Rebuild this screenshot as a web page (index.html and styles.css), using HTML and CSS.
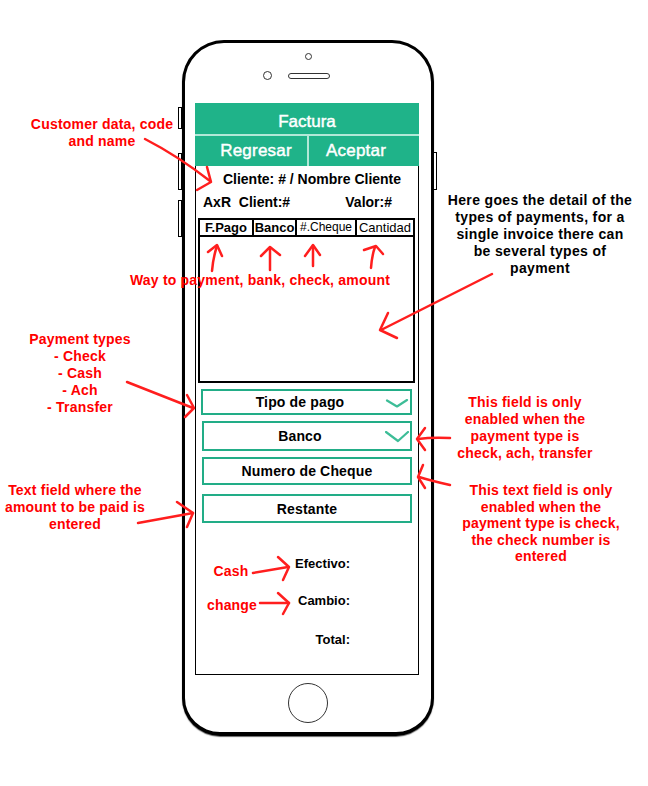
FILE: index.html
```html
<!DOCTYPE html>
<html lang="es">
<head>
<meta charset="utf-8">
<title>Factura mockup</title>
<link rel="stylesheet" href="styles.css">
</head>
<body>
<div class="canvas">
  <div class="phone">
    <span class="side-btn left b1"></span>
    <span class="side-btn left b2"></span>
    <span class="side-btn left b3"></span>
    <span class="side-btn right b4"></span>
    <div class="phone-top">
      <span class="sensor"></span>
      <div class="cam-row"><span class="cam"></span><span class="speaker"></span></div>
    </div>
    <div class="screen">
      <div class="title">Factura</div>
      <div class="actions">
        <div class="act back">Regresar</div>
        <div class="sep"></div>
        <div class="act ok">Aceptar</div>
      </div>
      <div class="content">
        <div class="cliente">Cliente: # / Nombre Cliente</div>
        <div class="info"><span>AxR&nbsp; Client:#</span><span>Valor:#</span></div>
        <div class="grid">
          <div class="grid-head">
            <div class="th bold">F.Pago</div>
            <div class="th bold">Banco</div>
            <div class="th small">#.Cheque</div>
            <div class="th last">Cantidad</div>
          </div>
        </div>
        <div class="field f1 select">Tipo de pago
          <svg class="chev" width="24" height="10" viewBox="0 0 24 10"><path d="M2 1.5 L12 7.5 L22 1"/></svg>
        </div>
        <div class="field f2 select">Banco
          <svg class="chev" width="24" height="12" viewBox="0 0 24 12"><path d="M1 1 L13 10 L23 1"/></svg>
        </div>
        <div class="field f3">Numero de Cheque</div>
        <div class="field f4">Restante</div>
        <div class="totals">
          <div class="t1">Efectivo:</div>
          <div class="t2">Cambio:</div>
          <div class="t3">Total:</div>
        </div>
      </div>
    </div>
    <div class="home"></div>
  </div>

  <svg class="marks" width="648" height="786" viewBox="0 0 648 786">
    <g class="red">
      <path d="M145 139 Q178 156 210 181"/>
      <path d="M207 167 L211 182 L197 190"/>
      <path d="M492 274 L381 330"/>
      <path d="M388 313 L380 330 L397 338"/>
      <path d="M212 271 Q213 258 217 246"/>
      <path d="M208 252 L217 245 L222 256"/>
      <path d="M270 270 L270 248"/>
      <path d="M261 256 L270 247 L280 255"/>
      <path d="M313 266 L313 246"/>
      <path d="M305 256 L313 245 L320 255"/>
      <path d="M371 268 Q372 255 375 247"/>
      <path d="M364 250 L376 246 L383 254"/>
      <path d="M127 382 L193 408"/>
      <path d="M187 395 L194 408 L185 417"/>
      <path d="M450 438 Q432 437 418 439"/>
      <path d="M425 428 L417 439 L425 450"/>
      <path d="M450 485 Q432 481 419 477"/>
      <path d="M423 465 L418 477 L425 488"/>
      <path d="M138 523 Q165 518 193 513"/>
      <path d="M177 502 L193 513 L187 527"/>
      <path d="M253 573 L288 567"/>
      <path d="M278 557 L289 567 L283 580"/>
      <path d="M260 603 L289 603"/>
      <path d="M278 593 L289 603 L283 614"/>
    </g>
  </svg>

  <div class="note n-customer">Customer data, code<br>and name</div>
  <div class="note n-way">Way to payment, bank, check, amount</div>
  <div class="note n-types">Payment types<br>- Check<br>- Cash<br>- Ach<br>- Transfer</div>
  <div class="note dark n-detail">Here goes the detail of the<br>types of payments, for a<br>single invoice there can<br>be several types of<br>payment</div>
  <div class="note n-bank">This field is only<br>enabled when the<br>payment type is<br>check, ach, transfer</div>
  <div class="note n-check">This text field is only<br>enabled when the<br>payment type is check,<br>the check number is<br>entered</div>
  <div class="note n-amount">Text field where the<br>amount to be paid is<br>entered</div>
  <div class="note n-cash">Cash</div>
  <div class="note n-change">change</div>
</div>
</body>
</html>
```

FILE: styles.css
```css
html, body {
  margin: 0;
  padding: 0;
  background: #fff;
}

body {
  font-family: "Liberation Sans", Arial, sans-serif;
  color: #000;
}

.canvas {
  position: relative;
  width: 648px;
  height: 786px;
  box-sizing: border-box;
  padding: 40px 0 0 182px;
  overflow: hidden;
}

/* ---------- phone ---------- */
.phone {
  position: relative;
  box-sizing: border-box;
  width: 252px;
  height: 696px;
  border: 3px solid #000;
  border-bottom-width: 4px;
  border-radius: 42px 42px 38px 38px;
  box-shadow: 0 1px 1px rgba(0, 0, 0, 0.6);
  display: flex;
  flex-direction: column;
  background: #fff;
}

.side-btn {
  position: absolute;
  width: 4px;
  box-sizing: border-box;
  border: 1px solid #000;
  background: #fff;
}
.side-btn.left { left: -7px; }
.side-btn.right { right: -6px; }
.b1 { top: 64px; height: 22px; }
.b2 { top: 110px; height: 37px; }
.b3 { top: 157px; height: 37px; }
.b4 { top: 109px; height: 38px; }

.phone-top {
  height: 60px;
  display: flex;
  flex-direction: column;
  align-items: center;
}

.sensor {
  width: 7px;
  height: 7px;
  box-sizing: border-box;
  border: 1px solid #333;
  border-radius: 50%;
  margin-top: 10px;
}

.cam-row {
  display: flex;
  align-items: center;
  gap: 16px;
  margin-top: 11px;
  margin-right: 24px;
}

.cam {
  width: 9px;
  height: 9px;
  box-sizing: border-box;
  border: 1px solid #333;
  border-radius: 50%;
}

.speaker {
  width: 42px;
  height: 6px;
  box-sizing: border-box;
  border: 1px solid #333;
  border-radius: 3px;
}

.home {
  align-self: center;
  width: 40px;
  height: 40px;
  box-sizing: border-box;
  border: 1.5px solid #333;
  border-radius: 50%;
  margin-top: 8px;
}

/* ---------- screen ---------- */
.screen {
  align-self: flex-start;
  margin-left: 10px;
  width: 224px;
  height: 572px;
  display: flex;
  flex-direction: column;
}

.title {
  height: 31px;
  box-sizing: border-box;
  padding-top: 9px;
  line-height: 20px;
  background: #1fb389;
  color: #fff;
  font-size: 17px;
  text-align: center;
  -webkit-text-stroke: 0.45px #fff;
}

.actions {
  height: 32px;
  box-sizing: border-box;
  border-top: 2px solid #b2e8d7;
  background: #1fb389;
  display: grid;
  grid-template-columns: 112px 2px 1fr;
  color: #fff;
  font-size: 17px;
  line-height: 20px;
  -webkit-text-stroke: 0.45px #fff;
}

.act {
  padding-top: 5px;
  text-align: center;
  letter-spacing: 0.2px;
}
.act.back { padding-left: 10px; }
.act.ok { padding-right: 16px; }
.sep { background: #b2e8d7; }

.content {
  flex: 1;
  border: 1px solid #000;
  border-top: none;
  display: flex;
  flex-direction: column;
}

.cliente {
  margin-top: 5px;
  padding-left: 10px;
  text-align: center;
  font-size: 14px;
  font-weight: bold;
  line-height: 17px;
}

.info {
  margin-top: 6px;
  display: flex;
  justify-content: space-between;
  padding: 0 26px 0 7px;
  font-size: 14px;
  font-weight: bold;
  line-height: 17px;
}

.grid {
  margin: 7px 3px 0 2px;
  height: 165px;
  box-sizing: border-box;
  border: 2px solid #000;
}

.grid-head {
  display: grid;
  grid-template-columns: 54px 43px 60px 1fr;
  height: 17px;
  box-sizing: border-box;
  border-bottom: 2px solid #000;
}

.th {
  border-right: 2px solid #000;
  font-size: 13px;
  line-height: 15px;
  text-align: center;
  white-space: nowrap;
  overflow: hidden;
}
.th.bold { font-weight: bold; }
.th.small { font-size: 12px; }
.th.last { border-right: none; }

.field {
  position: relative;
  box-sizing: border-box;
  border: 2px solid #22ad87;
  display: flex;
  align-items: center;
  justify-content: center;
  font-size: 14px;
  font-weight: bold;
  letter-spacing: 0.15px;
}

.f1 { margin: 6px 6px 0 5px; height: 26px; padding-right: 13px; }
.f2 { margin: 6px 6px 0 6px; height: 30px; padding-right: 14px; }
.f3 { margin: 6px 6px 0 6px; height: 28px; }
.f4 { margin: 9px 6px 0 6px; height: 29px; }

.chev {
  position: absolute;
  fill: none;
  stroke: #3dbd97;
  stroke-width: 2.2;
  stroke-linecap: round;
  stroke-linejoin: round;
}
.f1 .chev { left: 182px; top: 8px; }
.f2 .chev { left: 181px; top: 8px; }

.totals {
  margin-top: 33px;
  padding-right: 68px;
  text-align: right;
  font-size: 13px;
  font-weight: bold;
  line-height: 16px;
}
.t2 { margin-top: 21px; }
.t3 { margin-top: 23px; }

/* ---------- annotations ---------- */
.marks {
  position: absolute;
  left: 0;
  top: 0;
  pointer-events: none;
}

.red path {
  fill: none;
  stroke: #ff1e1e;
  stroke-width: 2.5;
  stroke-linecap: round;
  stroke-linejoin: round;
}

.note {
  position: absolute;
  font-size: 14px;
  font-weight: bold;
  color: #f00;
  text-align: center;
  line-height: 17px;
  letter-spacing: 0.2px;
  white-space: nowrap;
}
.note.dark {
  color: #000;
  letter-spacing: 0.35px;
}

.n-customer { left: 2px; top: 116px; width: 200px; }
.n-way { left: 110px; top: 272px; width: 300px; }
.n-types { left: 0; top: 331px; width: 160px; }
.n-detail { left: 435px; top: 192px; width: 210px; }
.n-bank { left: 425px; top: 394px; width: 200px; }
.n-check { left: 441px; top: 482px; width: 200px; line-height: 16.5px; }
.n-amount { left: 0; top: 482px; width: 150px; }
.n-cash { left: 201px; top: 563px; width: 60px; }
.n-change { left: 202px; top: 597px; width: 60px; }
```
